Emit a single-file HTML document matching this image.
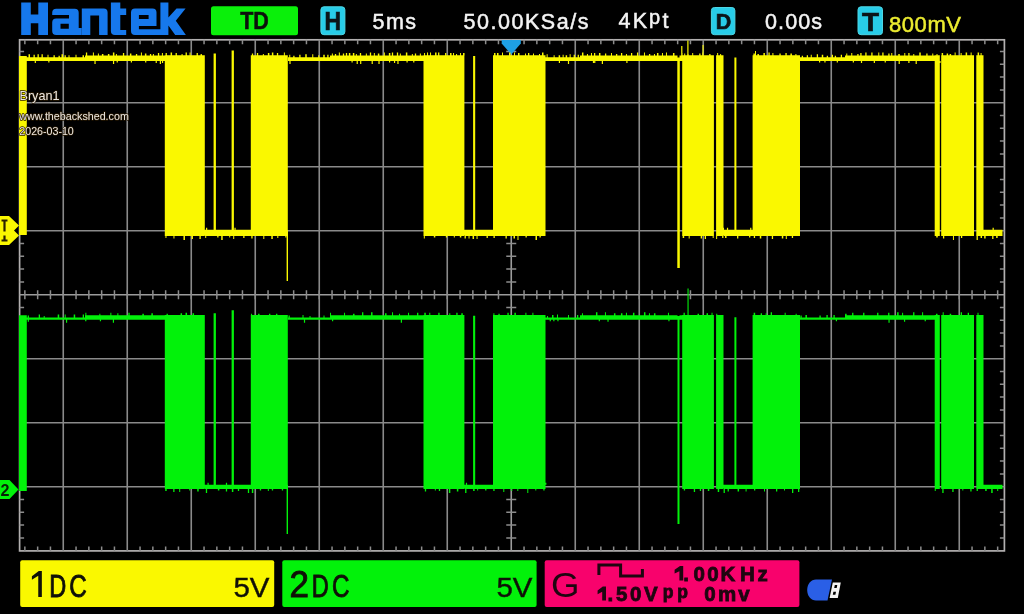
<!DOCTYPE html>
<html><head><meta charset="utf-8">
<style>
html,body{margin:0;padding:0;background:#000;width:1024px;height:614px;overflow:hidden}
svg{position:absolute;left:0;top:0;will-change:transform;filter:blur(0.35px)}
text{font-family:"Liberation Sans",sans-serif}
</style></head>
<body>
<svg width="1024" height="614" viewBox="0 0 1024 614">
<rect width="1024" height="614" fill="#000"/>
<g fill="#1678ec">
<path fill-rule="evenodd" d="M21.2 2.6H30.8V14.5H38.3V2.6H48V35.1H38.3V23.3H30.8V35.1H21.2Z
M56.2 8.7H74.7Q78.7 8.7 78.7 12.7V28H82V35.1H56.2Q52.2 35.1 52.2 31.1V22.5Q52.2 18.5 56.2 18.5H69V15H52.2V12.7Q52.2 8.7 56.2 8.7Z
M60.5 23.7H68.8V28.7H60.5Z
M81.8 8.5H103.6Q107.6 8.5 107.6 12.5V35.1H99.1V15.6H90.3V35.1H81.8Z
M110.9 2.6H120.3V8.5H126.2V15H120.3V30H126.2V35.1H114.9Q110.9 35.1 110.9 31.1Z
M135 8.5H152.5Q156.5 8.5 156.5 12.5V26H138.9V29.3H160.4V2.6H168.4V17.5L176.5 8.5H185.6L175.8 20.8L185.9 35.1H175.2L168.4 25.5V35.1H135Q131 35.1 131 31.1V12.5Q131 8.5 135 8.5Z
M138.9 15H148.6V18.9H138.9Z"/>

</g>
<rect x="211" y="6.3" width="87" height="28.9" rx="2.5" fill="#0af00a"/>
<text x="240.2" y="28.9" font-size="23" font-weight="bold" fill="#0c100c" stroke="#0c100c" stroke-width="0.5" textLength="28.6" lengthAdjust="spacingAndGlyphs">TD</text>
<g fill="#28cce8" stroke="#4cd6e4" stroke-width="1">
<rect x="320.9" y="6.8" width="24" height="27.9" rx="3"/>
<rect x="711.4" y="7.5" width="23.5" height="27.2" rx="3"/>
<rect x="858" y="6.8" width="24.5" height="27.9" rx="3"/>
</g>
<g fill="#0c1418" stroke="#0c1418" stroke-width="0.7" font-weight="bold">
<text x="324.5" y="30" font-size="26" textLength="16.5" lengthAdjust="spacingAndGlyphs">H</text>
<text x="715.8" y="29.3" font-size="21.5" textLength="15.5" lengthAdjust="spacingAndGlyphs">D</text>
<text x="862" y="30.7" font-size="26.5" textLength="17" lengthAdjust="spacingAndGlyphs">T</text>
</g>
<g fill="#f4f4f4" font-size="21.5" stroke="#f4f4f4" stroke-width="0.5">
<text x="372.5" y="29.3" textLength="43.5" lengthAdjust="spacing">5ms</text>
<text x="463.5" y="29" textLength="125" lengthAdjust="spacing">50.00KSa/s</text>
<text x="618.5" y="27.9" textLength="28.5" lengthAdjust="spacing">4K</text><text x="649" y="24.4" font-size="20">p</text><text x="662.5" y="27.9">t</text>
<text x="765" y="29" textLength="57" lengthAdjust="spacing">0.00s</text>
</g>
<text x="889" y="31.6" font-size="22" fill="#ecec30" stroke="#ecec30" stroke-width="0.5" textLength="72" lengthAdjust="spacing">800mV</text>
<rect x="19.6" y="39.8" width="984.8" height="511.1" fill="none" stroke="#b2b0b0" stroke-width="1.7"/>
<path d="M63.25 39.8V550.9M127.25 39.8V550.9M191.25 39.8V550.9M255.25 39.8V550.9M319.25 39.8V550.9M383.25 39.8V550.9M447.25 39.8V550.9M575.25 39.8V550.9M639.25 39.8V550.9M703.25 39.8V550.9M767.25 39.8V550.9M831.25 39.8V550.9M895.25 39.8V550.9M959.25 39.8V550.9M19.6 102.7H1004.4M19.6 166.7H1004.4M19.6 230.7H1004.4M19.6 358.7H1004.4M19.6 422.7H1004.4M19.6 486.7H1004.4" stroke="#8a8a8a" stroke-width="1.6" fill="none"/>
<path d="M511.25 39.8V550.9M19.6 294.7H1004.4" stroke="#9c9c9c" stroke-width="1.6" fill="none"/>
<path d="M511.25 290.2v9M498.45 39.8v4.5M498.45 550.9v-4.5M498.45 290.2v9M485.65 39.8v4.5M485.65 550.9v-4.5M485.65 290.2v9M472.85 39.8v4.5M472.85 550.9v-4.5M472.85 290.2v9M460.05 39.8v4.5M460.05 550.9v-4.5M460.05 290.2v9M447.25 290.2v9M434.45 39.8v4.5M434.45 550.9v-4.5M434.45 290.2v9M421.65 39.8v4.5M421.65 550.9v-4.5M421.65 290.2v9M408.85 39.8v4.5M408.85 550.9v-4.5M408.85 290.2v9M396.05 39.8v4.5M396.05 550.9v-4.5M396.05 290.2v9M383.25 290.2v9M370.45 39.8v4.5M370.45 550.9v-4.5M370.45 290.2v9M357.65 39.8v4.5M357.65 550.9v-4.5M357.65 290.2v9M344.85 39.8v4.5M344.85 550.9v-4.5M344.85 290.2v9M332.05 39.8v4.5M332.05 550.9v-4.5M332.05 290.2v9M319.25 290.2v9M306.45 39.8v4.5M306.45 550.9v-4.5M306.45 290.2v9M293.65 39.8v4.5M293.65 550.9v-4.5M293.65 290.2v9M280.85 39.8v4.5M280.85 550.9v-4.5M280.85 290.2v9M268.05 39.8v4.5M268.05 550.9v-4.5M268.05 290.2v9M255.25 290.2v9M242.45 39.8v4.5M242.45 550.9v-4.5M242.45 290.2v9M229.65 39.8v4.5M229.65 550.9v-4.5M229.65 290.2v9M216.85 39.8v4.5M216.85 550.9v-4.5M216.85 290.2v9M204.05 39.8v4.5M204.05 550.9v-4.5M204.05 290.2v9M191.25 290.2v9M178.45 39.8v4.5M178.45 550.9v-4.5M178.45 290.2v9M165.65 39.8v4.5M165.65 550.9v-4.5M165.65 290.2v9M152.85 39.8v4.5M152.85 550.9v-4.5M152.85 290.2v9M140.05 39.8v4.5M140.05 550.9v-4.5M140.05 290.2v9M127.25 290.2v9M114.45 39.8v4.5M114.45 550.9v-4.5M114.45 290.2v9M101.65 39.8v4.5M101.65 550.9v-4.5M101.65 290.2v9M88.85 39.8v4.5M88.85 550.9v-4.5M88.85 290.2v9M76.05 39.8v4.5M76.05 550.9v-4.5M76.05 290.2v9M63.25 290.2v9M50.45 39.8v4.5M50.45 550.9v-4.5M50.45 290.2v9M37.65 39.8v4.5M37.65 550.9v-4.5M37.65 290.2v9M24.85 39.8v4.5M24.85 550.9v-4.5M24.85 290.2v9M524.05 39.8v4.5M524.05 550.9v-4.5M524.05 290.2v9M536.85 39.8v4.5M536.85 550.9v-4.5M536.85 290.2v9M549.65 39.8v4.5M549.65 550.9v-4.5M549.65 290.2v9M562.45 39.8v4.5M562.45 550.9v-4.5M562.45 290.2v9M575.25 290.2v9M588.05 39.8v4.5M588.05 550.9v-4.5M588.05 290.2v9M600.85 39.8v4.5M600.85 550.9v-4.5M600.85 290.2v9M613.65 39.8v4.5M613.65 550.9v-4.5M613.65 290.2v9M626.45 39.8v4.5M626.45 550.9v-4.5M626.45 290.2v9M639.25 290.2v9M652.05 39.8v4.5M652.05 550.9v-4.5M652.05 290.2v9M664.85 39.8v4.5M664.85 550.9v-4.5M664.85 290.2v9M677.65 39.8v4.5M677.65 550.9v-4.5M677.65 290.2v9M690.45 39.8v4.5M690.45 550.9v-4.5M690.45 290.2v9M703.25 290.2v9M716.05 39.8v4.5M716.05 550.9v-4.5M716.05 290.2v9M728.85 39.8v4.5M728.85 550.9v-4.5M728.85 290.2v9M741.65 39.8v4.5M741.65 550.9v-4.5M741.65 290.2v9M754.45 39.8v4.5M754.45 550.9v-4.5M754.45 290.2v9M767.25 290.2v9M780.05 39.8v4.5M780.05 550.9v-4.5M780.05 290.2v9M792.85 39.8v4.5M792.85 550.9v-4.5M792.85 290.2v9M805.65 39.8v4.5M805.65 550.9v-4.5M805.65 290.2v9M818.45 39.8v4.5M818.45 550.9v-4.5M818.45 290.2v9M831.25 290.2v9M844.05 39.8v4.5M844.05 550.9v-4.5M844.05 290.2v9M856.85 39.8v4.5M856.85 550.9v-4.5M856.85 290.2v9M869.65 39.8v4.5M869.65 550.9v-4.5M869.65 290.2v9M882.45 39.8v4.5M882.45 550.9v-4.5M882.45 290.2v9M895.25 290.2v9M908.05 39.8v4.5M908.05 550.9v-4.5M908.05 290.2v9M920.85 39.8v4.5M920.85 550.9v-4.5M920.85 290.2v9M933.65 39.8v4.5M933.65 550.9v-4.5M933.65 290.2v9M946.45 39.8v4.5M946.45 550.9v-4.5M946.45 290.2v9M959.25 290.2v9M972.05 39.8v4.5M972.05 550.9v-4.5M972.05 290.2v9M984.85 39.8v4.5M984.85 550.9v-4.5M984.85 290.2v9M997.65 39.8v4.5M997.65 550.9v-4.5M997.65 290.2v9M19.6 281.9h4.5M1004.4 281.9h-4.5M506.25 281.9h10M19.6 269.1h4.5M1004.4 269.1h-4.5M506.25 269.1h10M19.6 256.3h4.5M1004.4 256.3h-4.5M506.25 256.3h10M19.6 243.5h4.5M1004.4 243.5h-4.5M506.25 243.5h10M19.6 217.9h4.5M1004.4 217.9h-4.5M506.25 217.9h10M19.6 205.1h4.5M1004.4 205.1h-4.5M506.25 205.1h10M19.6 192.3h4.5M1004.4 192.3h-4.5M506.25 192.3h10M19.6 179.5h4.5M1004.4 179.5h-4.5M506.25 179.5h10M19.6 153.9h4.5M1004.4 153.9h-4.5M506.25 153.9h10M19.6 141.1h4.5M1004.4 141.1h-4.5M506.25 141.1h10M19.6 128.3h4.5M1004.4 128.3h-4.5M506.25 128.3h10M19.6 115.5h4.5M1004.4 115.5h-4.5M506.25 115.5h10M19.6 89.9h4.5M1004.4 89.9h-4.5M506.25 89.9h10M19.6 77.1h4.5M1004.4 77.1h-4.5M506.25 77.1h10M19.6 64.3h4.5M1004.4 64.3h-4.5M506.25 64.3h10M19.6 51.5h4.5M1004.4 51.5h-4.5M506.25 51.5h10M19.6 307.5h4.5M1004.4 307.5h-4.5M506.25 307.5h10M19.6 320.3h4.5M1004.4 320.3h-4.5M506.25 320.3h10M19.6 333.1h4.5M1004.4 333.1h-4.5M506.25 333.1h10M19.6 345.9h4.5M1004.4 345.9h-4.5M506.25 345.9h10M19.6 371.5h4.5M1004.4 371.5h-4.5M506.25 371.5h10M19.6 384.3h4.5M1004.4 384.3h-4.5M506.25 384.3h10M19.6 397.1h4.5M1004.4 397.1h-4.5M506.25 397.1h10M19.6 409.9h4.5M1004.4 409.9h-4.5M506.25 409.9h10M19.6 435.5h4.5M1004.4 435.5h-4.5M506.25 435.5h10M19.6 448.3h4.5M1004.4 448.3h-4.5M506.25 448.3h10M19.6 461.1h4.5M1004.4 461.1h-4.5M506.25 461.1h10M19.6 473.9h4.5M1004.4 473.9h-4.5M506.25 473.9h10M19.6 499.5h4.5M1004.4 499.5h-4.5M506.25 499.5h10M19.6 512.3h4.5M1004.4 512.3h-4.5M506.25 512.3h10M19.6 525.1h4.5M1004.4 525.1h-4.5M506.25 525.1h10M19.6 537.9h4.5M1004.4 537.9h-4.5M506.25 537.9h10" stroke="#8c8c8c" stroke-width="1.5" fill="none"/>
<path d="M501.7 40H520.8V43.5L511.3 54.5L501.7 43.5Z" fill="#1ea0e4"/>
<path d="M19 56H26.8V235H19ZM26.8 57.2H85V60.9H26.8ZM288 57.2H330V60.9H288ZM545.5 57.2H580V60.9H545.5ZM800 57.2H845V60.9H800ZM85 55.6H165V60.9H85ZM330 55.6H423.5V60.9H330ZM580 55.6H677.5V60.9H580ZM679.5 55.6H682.5V60.9H679.5ZM845 55.6H934.8V60.9H845ZM164.8 55.3H204.8V236H164.8ZM250.8 55.3H287.8V236H250.8ZM423.5 55.3H464.4V236H423.5ZM493 55.3H545.5V236H493ZM682.2 55.3H713.9V236H682.2ZM716.1 55.3H723.5V236H716.1ZM752.6 55.3H800V236H752.6ZM934.7 55.3H939.8V236H934.7ZM941.2 55.3H974V236H941.2ZM976.3 55.3H983.5V236H976.3ZM204.8 229.8H250.8V236H204.8ZM464.4 229.8H493V236H464.4ZM723.5 229.8H752.6V236H723.5ZM983.5 229.8H1002.5V236H983.5ZM213.6 53.6H215.9V236H213.6ZM231.6 50.6H233.9V236H231.6ZM473.1 56.1H475.2V236H473.1ZM734.4 57.6H736.4V236H734.4ZM85.9 52.6H87.2V55.6H85.9ZM92.9 52.6H93.9V55.6H92.9ZM94.44 60.9H95.64V63.9H94.44ZM97.9 53.6H98.9V55.6H97.9ZM101.9 54.1H103.4V55.6H101.9ZM107.9 54.1H109.4V55.6H107.9ZM112.9 52.6H114.4V55.6H112.9ZM112.95 60.9H114.15V63.9H112.95ZM115.9 54.1H116.9V55.6H115.9ZM116.63 60.9H117.83V62.4H116.63ZM122.9 53.1H124.2V55.6H122.9ZM129.9 53.6H131.4V55.6H129.9ZM130.79 60.9H131.99V62.4H130.79ZM135.9 54.1H137.2V55.6H135.9ZM140.9 52.6H141.9V55.6H140.9ZM144.9 53.6H146.4V55.6H144.9ZM145.12 60.9H146.32V62.4H145.12ZM149.9 54.1H151.2V55.6H149.9ZM152.9 54.1H153.9V55.6H152.9ZM155.64 60.9H156.84V62.9H155.64ZM157.9 53.1H159.2V55.6H157.9ZM159.79 60.9H160.99V63.9H159.79ZM161.9 53.1H162.9V55.6H161.9ZM161.95 60.9H163.15V62.9H161.95ZM331.85 53.6H332.85V55.6H331.85ZM334.85 54.1H336.15V55.6H334.85ZM338.85 52.6H339.85V55.6H338.85ZM342.85 53.6H344.15V55.6H342.85ZM345.85 53.1H347.15V55.6H345.85ZM348.85 53.1H350.35V55.6H348.85ZM351.5 60.9H352.7V62.4H351.5ZM352.85 53.1H354.35V55.6H352.85ZM355.85 54.1H356.85V55.6H355.85ZM356.62 60.9H357.82V63.9H356.62ZM359.85 53.1H361.15V55.6H359.85ZM360.12 60.9H361.32V63.9H360.12ZM365.85 53.6H366.85V55.6H365.85ZM369.85 52.6H371.15V55.6H369.85ZM371.61 60.9H372.81V63.9H371.61ZM373.85 53.1H374.85V55.6H373.85ZM377.85 53.6H379.35V55.6H377.85ZM378.42 60.9H379.62V63.9H378.42ZM383.85 52.6H384.85V55.6H383.85ZM388.85 53.1H390.35V55.6H388.85ZM388.99 60.9H390.19V62.4H388.99ZM391.85 52.6H393.15V55.6H391.85ZM393.96 60.9H395.16V62.9H393.96ZM396.85 52.6H398.15V55.6H396.85ZM397.37 60.9H398.57V63.9H397.37ZM399.85 53.6H400.85V55.6H399.85ZM405.85 52.6H407.35V55.6H405.85ZM406.48 60.9H407.68V62.4H406.48ZM411.85 54.1H412.85V55.6H411.85ZM413.18 60.9H414.38V62.4H413.18ZM414.85 53.6H416.15V55.6H414.85ZM419.85 53.6H420.85V55.6H419.85ZM581.96 52.6H583.46V55.6H581.96ZM586.96 54.1H587.96V55.6H586.96ZM590.96 53.1H591.96V55.6H590.96ZM592.87 60.9H594.07V62.9H592.87ZM593.96 53.1H595.26V55.6H593.96ZM594.18 60.9H595.38V62.9H594.18ZM598.96 53.1H600.46V55.6H598.96ZM601.77 60.9H602.97V63.9H601.77ZM604.96 53.6H606.26V55.6H604.96ZM610.96 53.1H611.96V55.6H610.96ZM615.96 54.1H617.26V55.6H615.96ZM620.96 53.1H622.26V55.6H620.96ZM625.96 54.1H626.96V55.6H625.96ZM626.31 60.9H627.51V62.9H626.31ZM630.96 53.1H632.26V55.6H630.96ZM636.96 52.6H638.26V55.6H636.96ZM643.96 52.6H644.96V55.6H643.96ZM648.96 54.1H650.26V55.6H648.96ZM653.96 54.1H654.96V55.6H653.96ZM656.96 53.1H658.46V55.6H656.96ZM661.96 53.1H662.96V55.6H661.96ZM665.96 52.6H666.96V55.6H665.96ZM672.96 53.1H674.46V55.6H672.96ZM681.28 53.1H682.58V55.6H681.28ZM846.27 53.6H847.27V55.6H846.27ZM851.27 53.1H852.27V55.6H851.27ZM852.76 60.9H853.96V62.4H852.76ZM857.27 54.1H858.57V55.6H857.27ZM860.27 53.1H861.57V55.6H860.27ZM860.91 60.9H862.11V62.9H860.91ZM865.27 52.6H866.57V55.6H865.27ZM871.27 52.6H872.57V55.6H871.27ZM873.75 60.9H874.95V62.9H873.75ZM878.27 52.6H879.27V55.6H878.27ZM882.27 52.6H883.57V55.6H882.27ZM884.64 60.9H885.84V62.4H884.64ZM888.27 53.6H889.57V55.6H888.27ZM891.27 53.1H892.27V55.6H891.27ZM898.27 54.1H899.77V55.6H898.27ZM898.6 60.9H899.8V63.9H898.6ZM904.27 53.1H905.27V55.6H904.27ZM908.27 53.1H909.57V55.6H908.27ZM908.3 60.9H909.5V62.9H908.3ZM913.27 54.1H914.27V55.6H913.27ZM915.6 60.9H916.8V63.9H915.6ZM919.27 52.6H920.77V55.6H919.27ZM926.27 53.6H927.57V55.6H926.27ZM932.27 53.6H933.27V55.6H932.27ZM165.58 53.1H166.88V55.6H165.58ZM168.24 60.9H169.44V62.4H168.24ZM170.58 52.6H172.08V55.6H170.58ZM175.58 53.1H176.88V55.6H175.58ZM178.52 60.9H179.72V62.4H178.52ZM181.58 54.1H182.58V55.6H181.58ZM182.75 60.9H183.95V62.4H182.75ZM185.58 52.6H186.88V55.6H185.58ZM187.73 60.9H188.93V62.4H187.73ZM189.58 52.6H190.58V55.6H189.58ZM190.6 60.9H191.8V62.9H190.6ZM196.58 53.1H197.88V55.6H196.58ZM200.58 54.1H201.88V55.6H200.58ZM251.87 53.6H253.17V55.6H251.87ZM253.42 60.9H254.62V63.9H253.42ZM256.87 53.1H258.17V55.6H256.87ZM262.87 54.1H263.87V55.6H262.87ZM267.87 53.1H269.37V55.6H267.87ZM271.87 52.6H273.37V55.6H271.87ZM276.87 53.1H278.17V55.6H276.87ZM283.87 52.6H284.87V55.6H283.87ZM284.29 60.9H285.49V63.9H284.29ZM424.05 53.1H425.05V55.6H424.05ZM427.05 52.6H428.05V55.6H427.05ZM430.05 52.6H431.05V55.6H430.05ZM435.05 52.6H436.55V55.6H435.05ZM435.33 60.9H436.53V62.4H435.33ZM438.05 52.6H439.35V55.6H438.05ZM445.05 53.1H446.35V55.6H445.05ZM446.53 60.9H447.73V62.9H446.53ZM450.05 53.1H451.55V55.6H450.05ZM450.62 60.9H451.82V63.9H450.62ZM453.05 53.1H454.05V55.6H453.05ZM456.05 54.1H457.05V55.6H456.05ZM456.08 60.9H457.28V62.9H456.08ZM460.05 53.1H461.05V55.6H460.05ZM463.05 53.1H464.55V55.6H463.05ZM494.02 53.1H495.52V55.6H494.02ZM495.61 60.9H496.81V62.9H495.61ZM497.02 53.1H498.52V55.6H497.02ZM502.02 52.6H503.02V55.6H502.02ZM509.02 52.6H510.52V55.6H509.02ZM509.67 60.9H510.87V63.9H509.67ZM514.02 52.6H515.02V55.6H514.02ZM516.24 60.9H517.44V62.9H516.24ZM518.02 53.1H519.52V55.6H518.02ZM520.79 60.9H521.99V62.4H520.79ZM525.02 53.6H526.02V55.6H525.02ZM525.74 60.9H526.94V63.9H525.74ZM528.02 53.1H529.32V55.6H528.02ZM530.52 60.9H531.72V62.9H530.52ZM533.02 53.6H534.02V55.6H533.02ZM539.02 54.1H540.02V55.6H539.02ZM541.07 60.9H542.27V62.9H541.07ZM542.02 52.6H543.52V55.6H542.02ZM684.2 53.6H685.2V55.6H684.2ZM687.2 54.1H688.7V55.6H687.2ZM692.2 53.1H693.2V55.6H692.2ZM692.54 60.9H693.74V62.4H692.54ZM699.2 53.6H700.5V55.6H699.2ZM702.2 52.6H703.2V55.6H702.2ZM704.24 60.9H705.44V62.4H704.24ZM709.2 54.1H710.5V55.6H709.2ZM717.13 53.1H718.13V55.6H717.13ZM720.13 54.1H721.13V55.6H720.13ZM721.49 60.9H722.69V63.9H721.49ZM753.41 53.6H754.91V55.6H753.41ZM754.95 60.9H756.15V62.4H754.95ZM757.41 54.1H758.91V55.6H757.41ZM763.41 53.1H764.91V55.6H763.41ZM768.41 52.6H769.71V55.6H768.41ZM772.41 53.1H773.41V55.6H772.41ZM779.41 53.6H780.71V55.6H779.41ZM780.4 60.9H781.6V63.9H780.4ZM785.41 53.1H786.71V55.6H785.41ZM790.41 53.6H791.91V55.6H790.41ZM792.8 60.9H794V62.9H792.8ZM795.41 54.1H796.41V55.6H795.41ZM936.51 54.1H937.51V55.6H936.51ZM939.39 60.9H940.59V62.9H939.39ZM941.63 53.1H943.13V55.6H941.63ZM941.86 60.9H943.06V63.9H941.86ZM946.63 53.6H948.13V55.6H946.63ZM947.82 60.9H949.02V63.9H947.82ZM949.63 54.1H951.13V55.6H949.63ZM950.34 60.9H951.54V62.9H950.34ZM954.63 52.6H955.63V55.6H954.63ZM960.63 53.1H961.63V55.6H960.63ZM961.38 60.9H962.58V62.9H961.38ZM965.63 52.6H967.13V55.6H965.63ZM970.63 52.6H971.63V55.6H970.63ZM977.59 52.6H979.09V55.6H977.59ZM980.59 53.1H981.59V55.6H980.59ZM28.51 54.2H30.01V57.2H28.51ZM33.51 54.7H34.81V57.2H33.51ZM34.71 60.9H35.91V62.9H34.71ZM37.51 54.2H38.81V57.2H37.51ZM41.51 54.2H42.81V57.2H41.51ZM47.51 54.7H48.51V57.2H47.51ZM48.25 60.9H49.45V62.4H48.25ZM53.51 55.2H54.81V57.2H53.51ZM58.51 55.7H59.81V57.2H58.51ZM61.51 54.2H63.01V57.2H61.51ZM64.51 55.2H65.81V57.2H64.51ZM68.51 55.2H69.51V57.2H68.51ZM75.51 54.7H76.51V57.2H75.51ZM82.51 55.2H84.01V57.2H82.51ZM289.25 54.7H290.25V57.2H289.25ZM289.4 60.9H290.6V63.9H289.4ZM293.25 55.7H294.55V57.2H293.25ZM299.25 54.7H300.55V57.2H299.25ZM305.25 54.2H306.75V57.2H305.25ZM312.25 54.2H313.25V57.2H312.25ZM318.25 55.2H319.25V57.2H318.25ZM323.25 54.7H324.75V57.2H323.25ZM327.25 54.7H328.55V57.2H327.25ZM546.63 54.2H547.63V57.2H546.63ZM553.63 55.2H554.63V57.2H553.63ZM558.63 55.2H560.13V57.2H558.63ZM558.81 60.9H560.01V62.9H558.81ZM562.63 54.7H563.63V57.2H562.63ZM565.63 55.2H567.13V57.2H565.63ZM567.9 60.9H569.1V63.9H567.9ZM569.63 54.2H570.63V57.2H569.63ZM573.63 54.7H574.93V57.2H573.63ZM577.63 54.7H578.93V57.2H577.63ZM801.74 55.7H803.04V57.2H801.74ZM806.74 55.2H808.04V57.2H806.74ZM810.74 54.7H811.74V57.2H810.74ZM816.74 54.2H818.04V57.2H816.74ZM819.02 60.9H820.22V62.4H819.02ZM821.74 54.7H823.24V57.2H821.74ZM824.36 60.9H825.56V62.4H824.36ZM826.74 55.7H828.04V57.2H826.74ZM831.74 54.7H833.04V57.2H831.74ZM834.74 55.7H836.04V57.2H834.74ZM836.73 60.9H837.93V62.4H836.73ZM840.74 54.7H842.04V57.2H840.74ZM165.46 236H166.46V238H165.46ZM173.46 236H174.46V238.5H173.46ZM183.46 236H184.96V240H183.46ZM191.46 236H192.96V239H191.46ZM199.46 236H200.76V239H199.46ZM202.36 227.8H203.56V229.8H202.36ZM251.3 236H252.6V238.5H251.3ZM253.33 227.8H254.53V229.8H253.33ZM263.3 236H264.3V239H263.3ZM271.3 236H272.8V239H271.3ZM273.07 227.8H274.27V229.8H273.07ZM277.3 236H278.3V238H277.3ZM285.3 236H286.3V237.5H285.3ZM423.82 236H424.82V238.5H423.82ZM433.82 236H435.32V237.5H433.82ZM445.82 236H447.12V237.5H445.82ZM448.03 227.8H449.23V229.8H448.03ZM453.82 236H454.82V237.5H453.82ZM459.82 236H461.32V237.5H459.82ZM493.49 236H494.79V238H493.49ZM505.49 236H506.79V238.5H505.49ZM513.49 236H514.99V238.5H513.49ZM514.96 227.8H516.16V229.8H514.96ZM517.49 236H518.49V240H517.49ZM525.49 236H526.79V237.5H525.49ZM535.49 236H536.99V240H535.49ZM536.58 227.8H537.78V229.8H536.58ZM539.49 236H540.79V237.5H539.49ZM682.69 236H684.19V238H682.69ZM688.69 236H689.69V238.5H688.69ZM700.69 236H701.99V238.5H700.69ZM704.69 236H705.99V239H704.69ZM712.69 236H713.69V238H712.69ZM716.13 236H717.13V239H716.13ZM722.13 236H723.43V238H722.13ZM722.84 227.8H724.04V229.8H722.84ZM753.79 236H755.09V238H753.79ZM754.63 227.8H755.83V229.8H754.63ZM759.79 236H761.29V238.5H759.79ZM771.79 236H773.09V239H771.79ZM781.79 236H783.29V238.5H781.79ZM785.79 236H786.79V239H785.79ZM791.79 236H793.09V238H791.79ZM936.25 236H937.75V237.5H936.25ZM942.95 236H944.25V238.5H942.95ZM952.95 236H953.95V240H952.95ZM960.95 236H962.25V238H960.95ZM976.56 236H977.86V240H976.56ZM980.56 236H982.06V238H980.56ZM205.21 236H206.21V238H205.21ZM206.02 227.8H207.22V229.8H206.02ZM217.21 236H218.51V237.5H217.21ZM221.21 236H222.71V240H221.21ZM229.21 236H230.21V237.5H229.21ZM233.21 236H234.21V239H233.21ZM234.45 227.8H235.65V229.8H234.45ZM243.21 236H244.51V238H243.21ZM464.55 236H465.85V238.5H464.55ZM468.55 236H469.55V238.5H468.55ZM472.55 236H474.05V239H472.55ZM476.55 236H477.55V239H476.55ZM486.55 236H487.85V238H486.55ZM725.04 236H726.54V238H725.04ZM726.93 227.8H728.13V229.8H726.93ZM737.04 236H738.34V238.5H737.04ZM749.04 236H750.34V237.5H749.04ZM750.17 227.8H751.37V229.8H750.17ZM984.16 236H985.66V238.5H984.16ZM992.16 236H993.46V239H992.16ZM992.58 227.8H993.78V229.8H992.58ZM996.16 236H997.66V238H996.16ZM286.6 230H288V281H286.6ZM677.3 57.5H679.8V268H677.3ZM681.2 46H682.4V56H681.2ZM687.3 40.6H688.5V56H687.3ZM702.5 45H703.6V56H702.5ZM755 51H756V56H755Z" fill="#faf800"/>
<path d="M19 315.3H26.8V491H19ZM26.8 317.6H85V319.8H26.8ZM288 317.6H330V319.8H288ZM545.5 317.6H580V319.8H545.5ZM800 317.6H845V319.8H800ZM85 315.3H165V319.8H85ZM330 315.3H423.5V319.8H330ZM580 315.3H677.5V319.8H580ZM679.5 315.3H682.5V319.8H679.5ZM845 315.3H934.8V319.8H845ZM164.8 315H204.8V489H164.8ZM250.8 315H287.8V489H250.8ZM423.5 315H464.4V489H423.5ZM493 315H545.5V489H493ZM682.2 315H713.9V489H682.2ZM716.1 315H723.5V489H716.1ZM752.6 315H800V489H752.6ZM934.7 315H939.8V489H934.7ZM941.2 315H974V489H941.2ZM976.3 315H983.5V489H976.3ZM204.8 484.8H250.8V489H204.8ZM464.4 484.8H493V489H464.4ZM723.5 484.8H752.6V489H723.5ZM983.5 484.8H1002.5V489H983.5ZM213.6 313.3H215.9V489H213.6ZM231.6 310.3H233.9V489H231.6ZM473.1 315.8H475.2V489H473.1ZM734.4 317.3H736.4V489H734.4ZM85.36 312.8H86.36V315.3H85.36ZM99.36 313.8H100.36V315.3H99.36ZM99.83 319.8H101.03V321.3H99.83ZM110.36 312.8H111.36V315.3H110.36ZM112.83 319.8H114.03V322.8H112.83ZM117.36 313.3H118.36V315.3H117.36ZM128.36 312.8H129.66V315.3H128.36ZM142.36 313.8H143.86V315.3H142.36ZM151.36 313.3H152.86V315.3H151.36ZM330.04 312.8H331.04V315.3H330.04ZM331.99 319.8H333.19V321.3H331.99ZM344.04 312.8H345.04V315.3H344.04ZM353.04 313.8H354.54V315.3H353.04ZM362.04 312.3H363.34V315.3H362.04ZM371.04 312.3H372.54V315.3H371.04ZM385.04 313.3H386.54V315.3H385.04ZM392.04 312.3H393.04V315.3H392.04ZM399.04 313.8H400.04V315.3H399.04ZM400.77 319.8H401.97V322.8H400.77ZM408.04 312.8H409.04V315.3H408.04ZM417.04 312.8H418.34V315.3H417.04ZM581.95 313.3H582.95V315.3H581.95ZM595.95 312.3H597.45V315.3H595.95ZM598.69 319.8H599.89V321.3H598.69ZM604.95 312.3H605.95V315.3H604.95ZM607.42 319.8H608.62V321.8H607.42ZM613.95 313.3H615.45V315.3H613.95ZM620.95 313.3H622.45V315.3H620.95ZM625.95 312.8H626.95V315.3H625.95ZM632.95 312.8H634.45V315.3H632.95ZM643.95 312.3H645.45V315.3H643.95ZM648.95 313.3H649.95V315.3H648.95ZM653.95 313.3H655.45V315.3H653.95ZM667.95 312.8H668.95V315.3H667.95ZM668.34 319.8H669.54V321.3H668.34ZM845.11 313.8H846.61V315.3H845.11ZM852.11 312.8H853.41V315.3H852.11ZM863.11 312.8H864.41V315.3H863.11ZM877.11 312.8H878.41V315.3H877.11ZM888.11 312.8H889.41V315.3H888.11ZM888.45 319.8H889.65V322.8H888.45ZM897.11 312.3H898.61V315.3H897.11ZM902.11 312.8H903.11V315.3H902.11ZM903.96 319.8H905.16V321.8H903.96ZM913.11 312.3H914.41V315.3H913.11ZM922.11 312.3H923.11V315.3H922.11ZM924.64 319.8H925.84V321.3H924.64ZM166.55 313.8H167.85V315.3H166.55ZM180.55 313.3H182.05V315.3H180.55ZM181.73 319.8H182.93V321.3H181.73ZM185.55 312.8H187.05V315.3H185.55ZM192.55 313.3H194.05V315.3H192.55ZM251.05 313.8H252.05V315.3H251.05ZM258.05 313.8H259.55V315.3H258.05ZM269.05 313.8H270.35V315.3H269.05ZM269.94 319.8H271.14V321.8H269.94ZM276.05 313.8H277.35V315.3H276.05ZM424.29 312.8H425.79V315.3H424.29ZM429.29 312.8H430.29V315.3H429.29ZM438.29 312.8H439.59V315.3H438.29ZM449.29 313.3H450.29V315.3H449.29ZM452.06 319.8H453.26V321.3H452.06ZM456.29 312.8H457.59V315.3H456.29ZM461.29 313.3H462.79V315.3H461.29ZM493.4 313.3H494.4V315.3H493.4ZM498.4 313.8H499.7V315.3H498.4ZM507.4 312.8H508.7V315.3H507.4ZM514.4 312.8H515.9V315.3H514.4ZM525.4 312.8H526.4V315.3H525.4ZM527.99 319.8H529.19V321.3H527.99ZM532.4 312.8H533.4V315.3H532.4ZM683.53 312.8H684.83V315.3H683.53ZM697.53 313.8H699.03V315.3H697.53ZM706.53 313.3H708.03V315.3H706.53ZM706.93 319.8H708.13V322.8H706.93ZM711.53 312.8H712.53V315.3H711.53ZM716.25 313.8H717.25V315.3H716.25ZM753.67 312.8H755.17V315.3H753.67ZM754.53 319.8H755.73V321.3H754.53ZM760.67 313.3H761.97V315.3H760.67ZM765.67 313.3H766.67V315.3H765.67ZM770.67 312.3H771.97V315.3H770.67ZM784.67 312.8H785.67V315.3H784.67ZM795.67 313.8H796.67V315.3H795.67ZM798 319.8H799.2V321.8H798ZM936.02 313.8H937.52V315.3H936.02ZM938.5 319.8H939.7V322.8H938.5ZM942.69 312.3H943.69V315.3H942.69ZM949.69 313.8H951.19V315.3H949.69ZM960.69 312.3H961.99V315.3H960.69ZM967.69 312.8H968.99V315.3H967.69ZM977.51 312.8H978.51V315.3H977.51ZM980.42 319.8H981.62V321.3H980.42ZM27.7 315.6H29V317.6H27.7ZM27.75 319.8H28.95V321.8H27.75ZM38.7 314.6H40V317.6H38.7ZM43.7 316.1H44.7V317.6H43.7ZM57.7 314.6H59.2V317.6H57.7ZM64.7 314.6H65.7V317.6H64.7ZM65.97 319.8H67.17V322.8H65.97ZM73.7 314.6H75.2V317.6H73.7ZM82.7 314.6H84V317.6H82.7ZM85.16 319.8H86.36V321.3H85.16ZM288.51 315.6H289.81V317.6H288.51ZM302.51 315.1H303.51V317.6H302.51ZM303.91 319.8H305.11V322.8H303.91ZM309.51 316.1H310.51V317.6H309.51ZM323.51 315.6H324.51V317.6H323.51ZM546.99 316.1H547.99V317.6H546.99ZM549.66 319.8H550.86V321.3H549.66ZM551.99 315.1H553.49V317.6H551.99ZM553.26 319.8H554.46V321.3H553.26ZM556.99 314.6H557.99V317.6H556.99ZM557.35 319.8H558.55V321.3H557.35ZM567.99 315.1H568.99V317.6H567.99ZM576.99 315.1H578.29V317.6H576.99ZM800.44 315.6H801.74V317.6H800.44ZM805.44 315.1H806.94V317.6H805.44ZM819.44 315.6H820.74V317.6H819.44ZM826.44 315.1H827.74V317.6H826.44ZM833.44 315.1H834.74V317.6H833.44ZM835.82 319.8H837.02V321.3H835.82ZM165.21 489H166.71V491H165.21ZM173.21 489H174.51V492H173.21ZM179.21 489H180.21V492H179.21ZM189.21 489H190.21V490.5H189.21ZM197.21 489H198.71V491.5H197.21ZM197.75 482.8H198.95V484.8H197.75ZM251.82 489H253.32V493H251.82ZM259.82 489H261.12V490.5H259.82ZM262.01 482.8H263.21V484.8H262.01ZM267.82 489H268.82V491H267.82ZM271.82 489H273.12V490.5H271.82ZM281.82 489H283.12V490.5H281.82ZM424.84 489H426.14V491.5H424.84ZM434.84 489H435.84V490.5H434.84ZM436.62 482.8H437.82V484.8H436.62ZM438.84 489H440.14V491H438.84ZM448.84 489H450.34V493H448.84ZM450.96 482.8H452.16V484.8H450.96ZM456.84 489H458.34V491.5H456.84ZM493.29 489H494.59V491H493.29ZM503.29 489H504.29V492H503.29ZM511.29 489H512.29V491H511.29ZM512.33 482.8H513.53V484.8H512.33ZM517.29 489H518.29V491H517.29ZM527.29 489H528.29V493H527.29ZM535.29 489H536.29V490.5H535.29ZM543.29 489H544.59V490.5H543.29ZM545.19 482.8H546.39V484.8H545.19ZM683.8 489H685.1V490.5H683.8ZM693.8 489H695.1V492H693.8ZM695.91 482.8H697.11V484.8H695.91ZM699.8 489H701.1V491H699.8ZM702.1 482.8H703.3V484.8H702.1ZM707.8 489H709.3V491H707.8ZM708.82 482.8H710.02V484.8H708.82ZM717.71 489H719.21V492H717.71ZM720.27 482.8H721.47V484.8H720.27ZM754 489H755.3V490.5H754ZM756.73 482.8H757.93V484.8H756.73ZM764 489H765V491.5H764ZM776 489H777.3V491.5H776ZM784 489H785V490.5H784ZM784.97 482.8H786.17V484.8H784.97ZM792 489H793.3V493H792ZM794 482.8H795.2V484.8H794ZM798 489H799.3V492H798ZM934.76 489H935.76V491H934.76ZM942.29 489H943.59V493H942.29ZM942.49 482.8H943.69V484.8H942.49ZM952.29 489H953.59V492H952.29ZM962.29 489H963.29V490.5H962.29ZM970.29 489H971.59V491.5H970.29ZM976.6 489H977.9V491H976.6ZM978.64 482.8H979.84V484.8H978.64ZM205.84 489H207.14V493H205.84ZM207.48 482.8H208.68V484.8H207.48ZM217.84 489H219.34V490.5H217.84ZM225.84 489H227.14V491.5H225.84ZM225.9 482.8H227.1V484.8H225.9ZM231.84 489H233.34V492H231.84ZM232.42 482.8H233.62V484.8H232.42ZM237.84 489H239.14V491H237.84ZM247.84 489H249.14V493H247.84ZM465.13 489H466.43V493H465.13ZM465.88 482.8H467.08V484.8H465.88ZM473.13 489H474.63V491H473.13ZM477.13 489H478.13V490.5H477.13ZM485.13 489H486.43V490.5H485.13ZM723.58 489H724.88V493H723.58ZM727.58 489H728.88V491.5H727.58ZM737.58 489H739.08V491.5H737.58ZM745.58 489H746.58V491.5H745.58ZM985.19 489H986.69V491H985.19ZM991.19 489H992.69V493H991.19ZM997.19 489H998.19V491H997.19ZM286.6 485H288V534H286.6ZM677.5 316H679.5V524H677.5ZM687.5 288.6H688.6V316H687.5Z" fill="#02f20a"/>
<path d="M0 216H9L19 225.5L14 230.5L19 235.5L9 245H0Z" fill="#faf800"/>
<path d="M1.5 220.5h6M4.5 220.5v11M4.5 235.5v5M1.5 240.5h6" stroke="#2a2200" stroke-width="2.2" fill="none"/>
<path d="M0 480H9.5L18.5 489.5L9.5 499H0Z" fill="#02f20a"/>
<text x="0.6" y="495.5" font-size="16.5" font-weight="bold" fill="#062006" textLength="9" lengthAdjust="spacingAndGlyphs">2</text>
<g fill="#ece8e4" stroke="#2a1a00" stroke-width="1.4" paint-order="stroke" stroke-linejoin="round">
<text x="19.5" y="99.7" font-size="13" textLength="40" lengthAdjust="spacingAndGlyphs">Bryan1</text>
<text x="19.3" y="120" font-size="11" textLength="109.5" lengthAdjust="spacingAndGlyphs">www.thebackshed.com</text>
<text x="19.3" y="134.6" font-size="11.5" textLength="54.5" lengthAdjust="spacingAndGlyphs">2026-03-10</text>
</g>
<rect x="20.2" y="560.3" width="254" height="46.6" rx="2" fill="#faf800"/>
<rect x="282.3" y="560.3" width="254.3" height="46.6" rx="2" fill="#02f20a"/>
<rect x="544.7" y="560.3" width="254.7" height="46.6" rx="2" fill="#f8026c"/>
<g fill="#101008" stroke="#101008" stroke-width="0.9">
<path d="M31.9 576.3L38.8 571H41.85V597H38.25V575.8L31.9 579.8Z" stroke="none"/>
<text x="49.3" y="597" font-size="30.5" textLength="17" lengthAdjust="spacingAndGlyphs">D</text>
<text x="69.3" y="597" font-size="30.5" textLength="17.5" lengthAdjust="spacingAndGlyphs">C</text>
<text x="233.5" y="596.8" font-size="27.5" stroke-width="0.4" textLength="36" lengthAdjust="spacingAndGlyphs">5V</text>
<text x="289.5" y="597" font-size="36" textLength="19.5" lengthAdjust="spacingAndGlyphs">2</text>
<text x="311.7" y="597" font-size="30.5" textLength="17" lengthAdjust="spacingAndGlyphs">D</text>
<text x="331.9" y="597" font-size="30.5" textLength="17.5" lengthAdjust="spacingAndGlyphs">C</text>
<text x="496.5" y="596.8" font-size="27.5" stroke-width="0.4" textLength="36" lengthAdjust="spacingAndGlyphs">5V</text>
</g>
<g fill="#1e0610">
<text x="551" y="597" font-size="35" textLength="28.5" lengthAdjust="spacingAndGlyphs">G</text>
<g font-size="20.5" font-weight="bold" stroke="#1e0610" stroke-width="0.8">
<text x="683.2 693.6 707.3 720.4 739.9 757.5" y="580.6">.00KHz</text>
<text x="607.4 615.9 629.9 643.9" y="600.6">.50V</text>
<text x="662.8 677.2" y="597.6" font-size="17.5">pp</text>
<text x="704.3 718 738.3" y="600.6">0mv</text>
</g>

</g>
<path d="M674.6 569.8L680 566H683.2V580.6H679.4V571.2L674.6 573.6ZM597.6 590.4L602.8 586.6H606V600.6H602.2V591.8L597.6 594.2Z" fill="#1e0610"/>
<path d="M598.9 575V565.1H620.6V576H642.4V569" stroke="#1e0610" stroke-width="3" fill="none"/>
<path d="M816 579.5H832L827.5 600.5H816C811 600.5 807.2 596 807.2 590C807.2 584 811 579.5 816 579.5Z" fill="#2a5fe6"/>
<path d="M832.8 582.4H840.8L837.8 598H829.6Z" fill="#f4f4f4"/>
<path d="M834.8 585H837.3L836.7 588H834.2ZM833.4 591.8H836L835.4 594.7H832.8Z" fill="#000"/>
</svg>
</body></html>
